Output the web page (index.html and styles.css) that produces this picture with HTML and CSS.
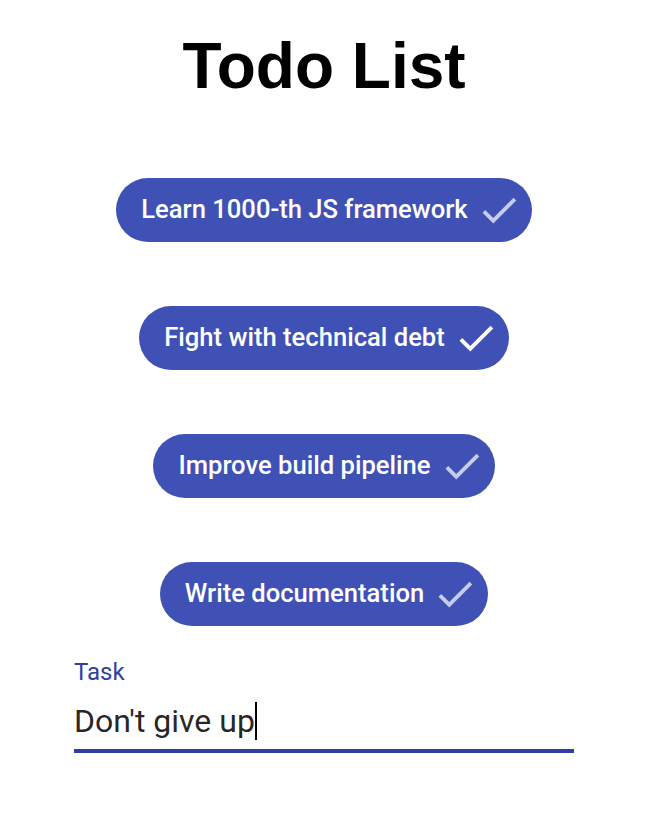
FILE: index.html
```html
<!DOCTYPE html>
<html lang="en">
<head>
<meta charset="utf-8">
<title>Todo List</title>
<link rel="stylesheet" href="styles.css">
</head>
<body>
<main class="app">
  <h1 class="title">Todo List</h1>
  <ul class="todos">
    <li class="chip"><span class="chip-label">Learn 1000-th JS framework</span><svg class="chip-icon" viewBox="0 0 24 24"><path d="M9 16.2L4.8 12l-1.4 1.4L9 19 21 7l-1.4-1.4L9 16.2z"/></svg></li>
    <li class="chip chip-active"><span class="chip-label">Fight with technical debt</span><svg class="chip-icon" viewBox="0 0 24 24"><path d="M9 16.2L4.8 12l-1.4 1.4L9 19 21 7l-1.4-1.4L9 16.2z"/></svg></li>
    <li class="chip"><span class="chip-label">Improve build pipeline</span><svg class="chip-icon" viewBox="0 0 24 24"><path d="M9 16.2L4.8 12l-1.4 1.4L9 19 21 7l-1.4-1.4L9 16.2z"/></svg></li>
    <li class="chip"><span class="chip-label">Write documentation</span><svg class="chip-icon" viewBox="0 0 24 24"><path d="M9 16.2L4.8 12l-1.4 1.4L9 19 21 7l-1.4-1.4L9 16.2z"/></svg></li>
  </ul>
  <div class="field">
    <label class="field-label">Task</label>
    <div class="field-input"><span class="field-value">Don't give up</span><span class="caret"></span></div>
  </div>
</main>
</body>
</html>
```
FILE: styles.css
```css
html, body {
  margin: 0;
  padding: 0;
  background: #ffffff;
}
body {
  width: 648px;
}
.app {
  display: flex;
  flex-direction: column;
  align-items: center;
  font-family: Roboto, "Noto Sans", sans-serif;
}
.title {
  margin: 34px 0 0 0;
  font-family: "Liberation Sans", Arial, sans-serif;
  font-weight: bold;
  font-size: 64px;
  line-height: 64px;
  color: #000;
}
.todos {
  list-style: none;
  margin: 80px 0 0 0;
  padding: 0;
  display: flex;
  flex-direction: column;
  align-items: center;
  gap: 64px;
}
.chip {
  display: inline-flex;
  align-items: center;
  height: 64px;
  border-radius: 32px;
  background: #3f51b5;
  color: #fff;
  padding-left: 25px;
  padding-bottom: 3px;
  box-sizing: border-box;
}
.chip-label {
  font-size: 25.6px;
  font-weight: 500;
  white-space: nowrap;
  line-height: normal;
}
.chip-icon {
  width: 46px;
  height: 46px;
  margin-top: 3px;
  margin-left: 8px;
  margin-right: 10px;
  fill: rgba(255, 255, 255, 0.7);
}
.chip-active .chip-icon {
  fill: #ffffff;
}
.field {
  width: 500px;
  margin-top: 34px;
  display: flex;
  flex-direction: column;
}
.field-label {
  font-size: 24px;
  line-height: 24px;
  color: #303f9f;
}
.field-input {
  margin-top: 19px;
  display: flex;
  align-items: center;
  height: 36px;
  padding-bottom: 10px;
  border-bottom: 4px solid #303f9f;
  font-size: 32px;
  line-height: 36px;
  color: rgba(0, 0, 0, 0.87);
}
.caret {
  display: inline-block;
  width: 2px;
  height: 38px;
  background: #000;
}
```
